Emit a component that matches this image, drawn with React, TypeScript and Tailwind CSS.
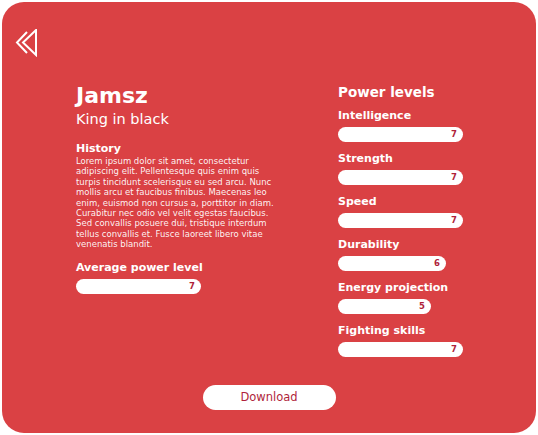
import React from "react";

const font = { fontFamily: '"DejaVu Sans", "Noto Sans", sans-serif' };

const powers = [
    { name: "Intelligence", value: 7 },
    { name: "Strength", value: 7 },
    { name: "Speed", value: 7 },
    { name: "Durability", value: 6 },
    { name: "Energy projection", value: 5 },
    { name: "Fighting skills", value: 7 },
];

// bar length grows with the level
const barWidth = (v: number) => (v === 7 ? 125 : v === 6 ? 108 : 93);

function Bar({ value }: { value: number }) {
    return (
        <div
            className="flex h-[15px] items-center justify-end rounded-full bg-white pr-[6px] text-[8.5px] font-bold text-[#b01f3b]"
            style={{ width: barWidth(value) }}
        >
            {value}
        </div>
    );
}

function BackIcon() {
    return (
        <svg width="24" height="28" viewBox="0 0 24 28" fill="none" stroke="white" strokeWidth="2" strokeLinejoin="miter">
            <path d="M12 3 L2 13.5 L12 24" />
            <path d="M21 1 L21 26 L8 13.5 Z" />
        </svg>
    );
}

export default function App() {
    return (
        <div className="h-[435px] w-[538px] bg-white p-[2px]" style={font}>
            <div className="flex h-[431px] w-[534px] flex-col rounded-[22px] bg-[#da4144] text-white">
                <div className="ml-[13px] mt-[27px]">
                    <BackIcon />
                </div>

                <div className="mt-[25px] flex pl-[74px]">
                    {/* Character side */}
                    <div className="w-[262px] pt-[1px]">
                        <h1 className="text-[22px] font-bold leading-[26px]">Jamsz</h1>
                        <p className="text-[14.5px] leading-[20px]">King in black</p>

                        <h3 className="mt-[13px] text-[11px] font-bold leading-[14px]">History</h3>
                        <p className="w-[204px] text-[8.5px] leading-[10.4px] text-white/95">
                            Lorem ipsum dolor sit amet, consectetur adipiscing elit. Pellentesque quis enim quis turpis tincidunt scelerisque eu sed arcu. Nunc mollis arcu et faucibus finibus. Maecenas leo enim, euismod non cursus a, porttitor in diam. Curabitur nec odio vel velit egestas faucibus. Sed convallis posuere dui, tristique interdum tellus convallis et. Fusce laoreet libero vitae venenatis blandit.
                        </p>

                        <h3 className="mt-[10px] text-[11px] font-bold leading-[16px]">Average power level</h3>
                        <div className="mt-[3px]">
                            <Bar value={7} />
                        </div>
                    </div>

                    {/* Power levels */}
                    <div>
                        <h2 className="text-[13.5px] font-semibold leading-[20px]">Power levels</h2>
                        <div className="mt-[6px] flex flex-col gap-[9px]">
                            {powers.map((p) => (
                                <div key={p.name}>
                                    <p className="mb-[3px] text-[11px] font-bold leading-[16px]">{p.name}</p>
                                    <Bar value={p.value} />
                                </div>
                            ))}
                        </div>
                    </div>
                </div>

                <div className="mb-[23px] mt-auto flex justify-center">
                    <button className="h-[25px] w-[133px] rounded-full bg-white text-[11.5px] text-[#b01f3b]">
                        Download
                    </button>
                </div>
            </div>
        </div>
    );
}
